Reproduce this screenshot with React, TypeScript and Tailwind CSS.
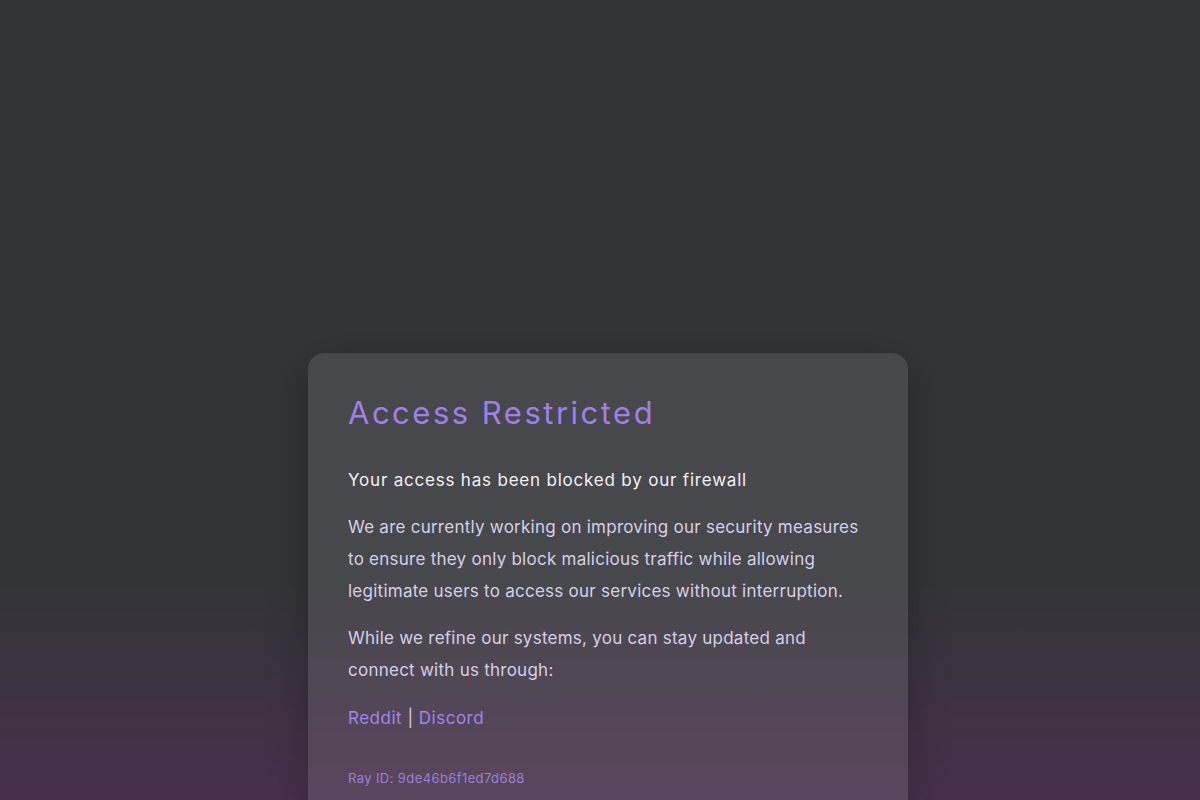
export default function App() {
  return (
    <div className="h-[800px] w-full overflow-hidden bg-[linear-gradient(180deg,#333438_0%,#333438_73%,#48304c_100%)] font-['Inter',sans-serif] flex justify-center pl-4 pt-[353px]">
      <div className="w-[600px] shrink-0 self-start rounded-2xl bg-white/10 shadow-[0_10px_40px_rgba(0,0,0,0.25)] px-10 pt-[38px] pb-10">
        <h1 className="text-[31px] leading-[44px] tracking-[2.5px] text-[#9f7fe8] font-normal">Access Restricted</h1>

        <p className="mt-[29px] text-[17px] leading-[32px] tracking-[0.8px] text-[#f2f0f5]">
          Your access has been blocked by our firewall
        </p>

        <p className="mt-[15px] text-[17px] leading-[32px] tracking-[0.25px] text-[#d6cfe8] whitespace-nowrap">
          We are currently working on improving our security measures
          <br />
          to ensure they only block malicious traffic while allowing
          <br />
          legitimate users to access our services without interruption.
        </p>

        <p className="mt-[15px] text-[17px] leading-[32px] tracking-[0.25px] text-[#d6cfe8] whitespace-nowrap">
          While we refine our systems, you can stay updated and
          <br />
          connect with us through:
        </p>

        <p className="mt-[16px] text-[17px] leading-[32px] tracking-[0.5px] text-[#d6cfe8]">
          <a href="#" className="text-[#a184ec]">Reddit</a> | <a href="#" className="text-[#a184ec]">Discord</a>
        </p>

        <p className="mt-[34px] text-[13px] leading-[20px] tracking-[0.4px] text-[#9b80da]">Ray ID: 9de46b6f1ed7d688</p>
      </div>
    </div>
  );
}
